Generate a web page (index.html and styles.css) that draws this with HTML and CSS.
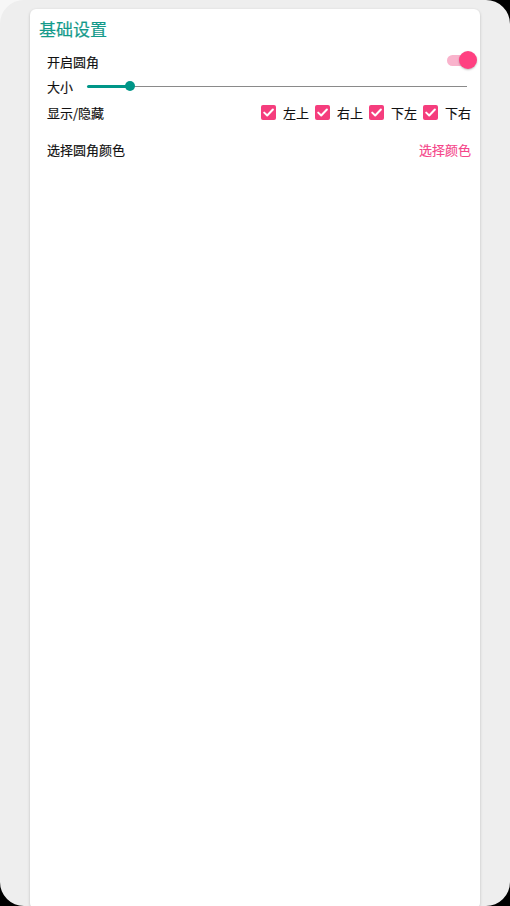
FILE: index.html
```html
<!DOCTYPE html>
<html lang="zh">
<head>
<meta charset="utf-8">
<title>基础设置</title>
<link rel="stylesheet" href="styles.css">
</head>
<body>
<div class="screen">
  <div class="card">
    <div class="title">基础设置</div>
    <div class="row row-switch">
      <span class="label">开启圆角</span>
      <span class="switch"><span class="track"></span><span class="thumb"></span></span>
    </div>
    <div class="row row-slider">
      <span class="label">大小</span>
      <span class="slider">
        <span class="active" style="width:43px"></span>
        <span class="knob"></span>
        <span class="rest"></span>
      </span>
    </div>
    <div class="row row-checks">
      <span class="label">显示/隐藏</span>
      <span class="checks">
        <span class="check"><span class="box"><svg viewBox="0 0 15 15" width="15" height="15"><path d="M3.2 7.6 L6.2 10.5 L11.9 4.5" fill="none" stroke="#fff" stroke-width="2" stroke-linecap="round" stroke-linejoin="round"/></svg></span><span class="ctext">左上</span></span>
        <span class="check"><span class="box"><svg viewBox="0 0 15 15" width="15" height="15"><path d="M3.2 7.6 L6.2 10.5 L11.9 4.5" fill="none" stroke="#fff" stroke-width="2" stroke-linecap="round" stroke-linejoin="round"/></svg></span><span class="ctext">右上</span></span>
        <span class="check"><span class="box"><svg viewBox="0 0 15 15" width="15" height="15"><path d="M3.2 7.6 L6.2 10.5 L11.9 4.5" fill="none" stroke="#fff" stroke-width="2" stroke-linecap="round" stroke-linejoin="round"/></svg></span><span class="ctext">下左</span></span>
        <span class="check"><span class="box"><svg viewBox="0 0 15 15" width="15" height="15"><path d="M3.2 7.6 L6.2 10.5 L11.9 4.5" fill="none" stroke="#fff" stroke-width="2" stroke-linecap="round" stroke-linejoin="round"/></svg></span><span class="ctext">下右</span></span>
      </span>
    </div>
    <div class="row row-color">
      <span class="label">选择圆角颜色</span>
      <span class="pick">选择颜色</span>
    </div>
  </div>
  <svg class="corner tl" viewBox="0 0 24 24" width="24" height="24"><path d="M0 0 H24 A24 24 0 0 0 0 24 Z" fill="#f7f7f7"/></svg>
  <svg class="corner tr" viewBox="0 0 24 24" width="24" height="24"><path d="M0 0 H24 V24 A24 24 0 0 0 0 0 Z" fill="#000"/></svg>
  <svg class="corner bl" viewBox="0 0 24 24" width="24" height="24"><path d="M0 0 A24 24 0 0 0 24 24 H0 Z" fill="#000"/></svg>
  <svg class="corner br" viewBox="0 0 24 24" width="24" height="24"><path d="M24 0 V24 H0 A24 24 0 0 0 24 0 Z" fill="#000"/></svg>
</div>
</body>
</html>
```
FILE: styles.css
```css
html, body {
  margin: 0;
  padding: 0;
  height: 100%;
  overflow: hidden;
}
body {
  background: #eeeeee;
  font-family: "Noto Sans CJK SC", "Noto Sans", sans-serif;
  color: #111111;
}
.screen {
  position: relative;
  width: 510px;
  height: 906px;
  padding-top: 9px;
  box-sizing: border-box;
}
.card {
  margin-left: 30px;
  width: 450px;
  height: 900px;
  background: #ffffff;
  border-radius: 6px;
  box-shadow: 0 1px 3px rgba(0, 0, 0, 0.22);
  box-sizing: border-box;
  padding-top: 8px;
}
.title {
  height: 24px;
  line-height: 24px;
  padding-left: 9px;
  font-size: 17px;
  color: #129a8a;
  -webkit-text-stroke: 0.2px #129a8a;
}
.row {
  display: flex;
  align-items: center;
  height: 24px;
  padding-left: 17px;
  padding-right: 9px;
  font-size: 13px;
  -webkit-text-stroke: 0.15px currentColor;
}
.row-switch { margin-top: 8px; }
.row-slider { margin-top: 1px; }
.row-checks { margin-top: 2px; }
.row-color { margin-top: 13px; }
.label { flex: none; }
.switch {
  position: relative;
  margin-left: auto;
  margin-right: -7px;
  width: 32px;
  height: 24px;
  display: flex;
  align-items: center;
}
.track {
  display: block;
  width: 26px;
  height: 11px;
  border-radius: 6px;
  background: #f9b3cc;
  margin-left: 1px;
  margin-top: -1px;
}
.thumb {
  position: absolute;
  right: 1px;
  top: 2px;
  width: 18px;
  height: 18px;
  border-radius: 50%;
  background: #ff4081;
  box-shadow: 0 1px 2px rgba(0, 0, 0, 0.25);
}
.slider {
  flex: 1;
  display: flex;
  align-items: center;
  margin-left: 14px;
  margin-right: 4px;
  height: 24px;
}
.active {
  display: block;
  height: 3px;
  background: #009688;
  border-radius: 2px 0 0 2px;
}
.knob {
  display: block;
  width: 10px;
  height: 10px;
  border-radius: 50%;
  background: #009688;
  margin-left: -5px;
  margin-right: -5px;
  position: relative;
}
.rest {
  display: block;
  flex: 1;
  height: 1px;
  background: #8a8a8a;
}
.checks {
  margin-left: auto;
  display: flex;
  align-items: center;
  gap: 6px;
}
.check {
  display: flex;
  align-items: center;
  gap: 7px;
}
.box {
  display: block;
  width: 15px;
  height: 15px;
  border-radius: 2px;
  background: #f53d7d;
}
.box svg { display: block; }
.pick {
  margin-left: auto;
  color: #f5468a;
}
.corner {
  position: absolute;
  display: block;
}
.corner.tl { left: 0; top: 0; }
.corner.tr { right: 0; top: 0; }
.corner.bl { left: 0; bottom: 0; }
.corner.br { right: 0; bottom: 0; }
```
